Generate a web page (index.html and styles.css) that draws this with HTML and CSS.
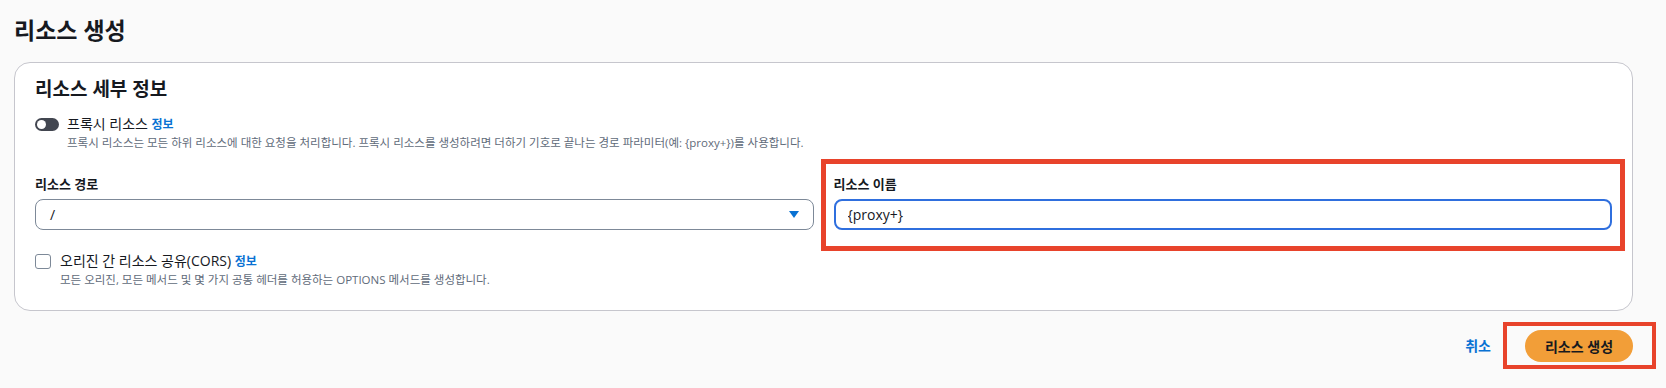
FILE: index.html
```html
<!DOCTYPE html>
<html lang="ko">
<head>
  <meta charset="UTF-8" />
  <meta name="viewport" content="width=device-width, initial-scale=1.0"/>
  <title>리소스 생성</title>
  <link rel="stylesheet" href="styles.css">
</head>
<body>
  <h1 class="page-title">리소스 생성</h1>

  <div class="card">
    <h2>리소스 세부 정보</h2>

    <div class="option-row">
      <span class="toggle"><span class="knob"></span></span>
      <div class="option-text">
        <div class="option-label">프록시 리소스 <a class="info-link">정보</a></div>
        <div class="option-desc">프록시 리소스는 모든 하위 리소스에 대한 요청을 처리합니다. 프록시 리소스를 생성하려면 더하기 기호로 끝나는 경로 파라미터(예: {proxy+})를 사용합니다.</div>
      </div>
    </div>

    <div class="field-row">
      <div class="form-group">
        <label>리소스 경로</label>
        <div class="select-box">
          <span>/</span>
          <span class="caret"></span>
        </div>
      </div>

      <div class="form-group highlight">
        <label for="resourceName">리소스 이름</label>
        <input type="text" id="resourceName" value="{proxy+}" />
      </div>
    </div>

    <div class="option-row cors-row">
      <span class="checkbox"></span>
      <div class="option-text">
        <div class="option-label">오리진 간 리소스 공유(CORS) <a class="info-link">정보</a></div>
        <div class="option-desc">모든 오리진, 모든 메서드 및 몇 가지 공통 헤더를 허용하는 OPTIONS 메서드를 생성합니다.</div>
      </div>
    </div>
  </div>

  <div class="button-group">
    <a class="cancel-link">취소</a>
    <div class="btn-mark">
      <button type="button" class="create-btn">리소스 생성</button>
    </div>
  </div>
</body>
</html>
```

FILE: styles.css
```css
body {
  margin: 0;
  padding: 0 33px 0 14px;
  background: #fafafa;
  color: #16191f;
  font-family: "Open Sans", "Noto Sans CJK KR", sans-serif;
}

.page-title {
  margin: 0;
  padding-top: 15px;
  font-size: 23px;
  line-height: 30px;
  font-weight: bold;
}

.card {
  margin-top: 17px;
  background: white;
  border: 1px solid #c6c6cd;
  border-radius: 16px;
  padding: 14px 20px 22px 20px;
}

.card h2 {
  margin: 0 0 14px 0;
  font-size: 19px;
  line-height: 24px;
  font-weight: bold;
}

.option-row {
  display: flex;
  align-items: flex-start;
}

.toggle {
  width: 24px;
  height: 13px;
  border-radius: 7px;
  background: #424650;
  margin-top: 3px;
  margin-right: 8px;
  position: relative;
  flex-shrink: 0;
}

.toggle .knob {
  position: absolute;
  left: 2px;
  top: 2px;
  width: 9px;
  height: 9px;
  border-radius: 50%;
  background: white;
}

.option-label {
  font-size: 14px;
  line-height: 18px;
}

.option-desc {
  font-size: 11.5px;
  line-height: 16px;
  color: #5f6b7a;
  margin-top: 1px;
}

.info-link {
  color: #0972d3;
  font-size: 12px;
  font-weight: bold;
}

.field-row {
  display: flex;
  gap: 20px;
  margin-top: 23px;
}

.form-group {
  flex: 1;
  position: relative;
}

.form-group label {
  display: block;
  font-size: 13px;
  line-height: 20px;
  font-weight: bold;
  margin-bottom: 5px;
}

.select-box {
  display: flex;
  align-items: center;
  justify-content: space-between;
  height: 31px;
  box-sizing: border-box;
  border: 1px solid #7d8998;
  border-radius: 8px;
  padding: 0 14px 0 14px;
  font-size: 14px;
}

.caret {
  width: 0;
  height: 0;
  border-left: 5px solid transparent;
  border-right: 5px solid transparent;
  border-top: 7px solid #0972d3;
}

.form-group input {
  display: block;
  width: 100%;
  height: 31px;
  box-sizing: border-box;
  border: 2px solid #2f6fde;
  border-radius: 8px;
  padding: 0 12px;
  font-family: inherit;
  font-size: 14px;
  color: #16191f;
  outline: none;
}

/* red annotation box drawn over the screenshot */
.highlight::after {
  content: "";
  position: absolute;
  top: -15px;
  left: -13px;
  right: -13px;
  bottom: -21px;
  border: 5px solid #e8432b;
  pointer-events: none;
}

.cors-row {
  margin-top: 22px;
}

.checkbox {
  width: 14px;
  height: 13px;
  border: 1.5px solid #7d8998;
  border-radius: 3px;
  margin-top: 2px;
  margin-right: 9px;
  flex-shrink: 0;
}

.button-group {
  display: flex;
  justify-content: flex-end;
  align-items: center;
  gap: 12px;
  margin-top: 11px;
  margin-right: -23px;
}

.cancel-link {
  color: #0972d3;
  font-size: 14px;
  line-height: 20px;
  font-weight: bold;
}

.btn-mark {
  display: flex;
  border: 4px solid #e8432b;
  padding: 4px 19px 3px 18px;
}

.create-btn {
  width: 108px;
  height: 32px;
  padding: 0;
  border: none;
  border-radius: 16px;
  background: #f29e38;
  color: #16191f;
  font-family: inherit;
  font-size: 14px;
  font-weight: bold;
}
```
